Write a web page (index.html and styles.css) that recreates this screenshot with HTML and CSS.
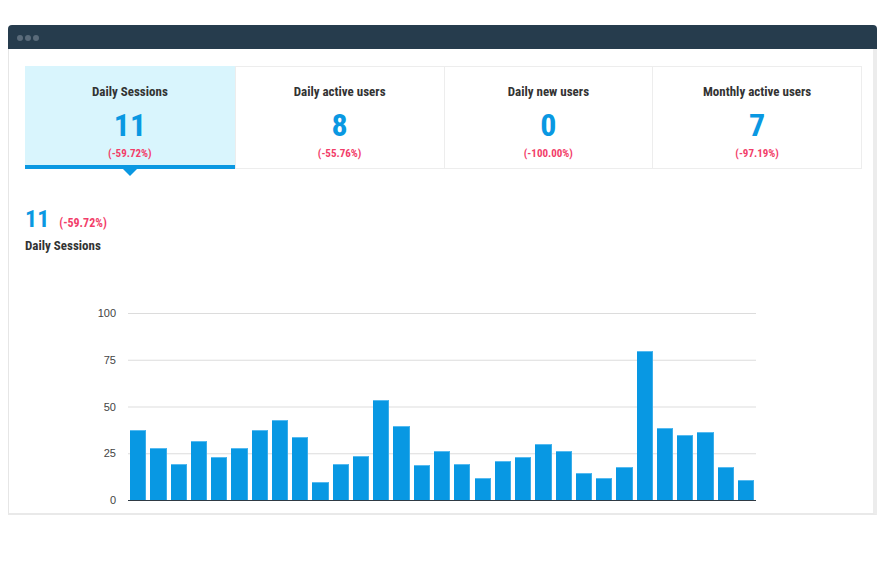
FILE: index.html
```html
<!DOCTYPE html>
<html lang="en">
<head>
<meta charset="utf-8">
<title>Daily Sessions</title>
<link rel="stylesheet" href="styles.css">
</head>
<body>
<div class="window">
  <div class="titlebar">
    <span class="dot"></span><span class="dot"></span><span class="dot"></span>
  </div>
  <div class="window-body">
    <div class="tabs">
      <div class="tab active">
        <div class="tab-title">Daily Sessions</div>
        <div class="tab-value">11</div>
        <div class="tab-change">(-59.72%)</div>
      </div>
      <div class="tab">
        <div class="tab-title">Daily active users</div>
        <div class="tab-value">8</div>
        <div class="tab-change">(-55.76%)</div>
      </div>
      <div class="tab">
        <div class="tab-title">Daily new users</div>
        <div class="tab-value">0</div>
        <div class="tab-change">(-100.00%)</div>
      </div>
      <div class="tab">
        <div class="tab-title">Monthly active users</div>
        <div class="tab-value">7</div>
        <div class="tab-change">(-97.19%)</div>
      </div>
    </div>

    <div class="summary">
      <div class="summary-head">
        <span class="summary-value">11</span>
        <span class="summary-change">(-59.72%)</span>
      </div>
      <div class="summary-label">Daily Sessions</div>
    </div>

    <div class="chart">
      <div class="y-axis">
        <span>100</span><span>75</span><span>50</span><span>25</span><span>0</span>
      </div>
      <div class="plot">
        <div class="col"><div class="bar" style="height:70px"></div></div>
        <div class="col"><div class="bar" style="height:52px"></div></div>
        <div class="col"><div class="bar" style="height:36px"></div></div>
        <div class="col"><div class="bar" style="height:59px"></div></div>
        <div class="col"><div class="bar" style="height:43px"></div></div>
        <div class="col"><div class="bar" style="height:52px"></div></div>
        <div class="col"><div class="bar" style="height:70px"></div></div>
        <div class="col"><div class="bar" style="height:80px"></div></div>
        <div class="col"><div class="bar" style="height:63px"></div></div>
        <div class="col"><div class="bar" style="height:18px"></div></div>
        <div class="col"><div class="bar" style="height:36px"></div></div>
        <div class="col"><div class="bar" style="height:44px"></div></div>
        <div class="col"><div class="bar" style="height:100px"></div></div>
        <div class="col"><div class="bar" style="height:74px"></div></div>
        <div class="col"><div class="bar" style="height:35px"></div></div>
        <div class="col"><div class="bar" style="height:49px"></div></div>
        <div class="col"><div class="bar" style="height:36px"></div></div>
        <div class="col"><div class="bar" style="height:22px"></div></div>
        <div class="col"><div class="bar" style="height:39px"></div></div>
        <div class="col"><div class="bar" style="height:43px"></div></div>
        <div class="col"><div class="bar" style="height:56px"></div></div>
        <div class="col"><div class="bar" style="height:49px"></div></div>
        <div class="col"><div class="bar" style="height:27px"></div></div>
        <div class="col"><div class="bar" style="height:22px"></div></div>
        <div class="col"><div class="bar" style="height:33px"></div></div>
        <div class="col"><div class="bar" style="height:149px"></div></div>
        <div class="col"><div class="bar" style="height:72px"></div></div>
        <div class="col"><div class="bar" style="height:65px"></div></div>
        <div class="col"><div class="bar" style="height:68px"></div></div>
        <div class="col"><div class="bar" style="height:33px"></div></div>
        <div class="col"><div class="bar" style="height:20px"></div></div>
      </div>
    </div>
  </div>
</div>
</body>
</html>
```

FILE: styles.css
```css
* { box-sizing: border-box; }

html, body {
  margin: 0;
  padding: 0;
  background: #ffffff;
}

body {
  font-family: "Roboto Condensed", Roboto, "Liberation Sans", sans-serif;
  font-stretch: condensed;
  color: #333333;
}

.window {
  width: 869px;
  margin: 25px 0 0 8px;
}

.titlebar {
  height: 24px;
  background: #263c4d;
  border-radius: 4px 4px 0 0;
  display: flex;
  align-items: center;
  gap: 2px;
  padding: 1px 0 0 9px;
}

.dot {
  width: 6px;
  height: 6px;
  border-radius: 50%;
  background: #5a6b7a;
}

.window-body {
  height: 466px;
  border-left: 1px solid #e6e6e6;
  border-right: 4px solid #ececec;
  border-bottom: 2px solid #e9e9e9;
  padding: 17px 11px 0 16px;
}

/* ---------- tabs ---------- */
.tabs {
  display: grid;
  grid-template-columns: repeat(4, 1fr);
  height: 103px;
  border: 1px solid #ededed;
}

.tab {
  position: relative;
  display: flex;
  flex-direction: column;
  align-items: center;
  padding-top: 17px;
  border-left: 1px solid #ededed;
}

.tab:first-child { border-left: none; }

.tab.active {
  background: #d9f5fd;
  margin: -1px 0 -1px -1px;
  padding-top: 18px;
}

.tab.active::after {
  content: "";
  position: absolute;
  left: 0;
  right: 0;
  bottom: 0;
  height: 4px;
  background: #0a98e2;
}

.tab.active::before {
  content: "";
  position: absolute;
  left: 50%;
  bottom: -7px;
  margin-left: -7px;
  border-left: 7px solid transparent;
  border-right: 7px solid transparent;
  border-top: 7px solid #0a98e2;
}

.tab-title {
  font-size: 13px;
  font-weight: 700;
  line-height: 16px;
  color: #333333;
}

.tab-value {
  margin-top: 8px;
  font-size: 32px;
  font-weight: 700;
  line-height: 34px;
  color: #0a98e2;
}

.tab-change {
  margin-top: 5px;
  font-size: 11px;
  font-weight: 700;
  line-height: 14px;
  color: #f23e6a;
}

/* ---------- summary ---------- */
.summary {
  margin-top: 37px;
}

.summary-head {
  display: flex;
  align-items: baseline;
  gap: 10px;
}

.summary-value {
  font-size: 24px;
  font-weight: 700;
  line-height: 26px;
  color: #0a98e2;
}

.summary-change {
  font-size: 12px;
  font-weight: 700;
  color: #f23e6a;
}

.summary-label {
  margin-top: 6px;
  font-size: 13px;
  font-weight: 700;
  line-height: 16px;
  color: #333333;
}

/* ---------- chart ---------- */
.chart {
  display: flex;
  margin-top: 59px;
}

.y-axis {
  width: 91px;
  height: 201px;
  margin-top: -7px;
  display: flex;
  flex-direction: column;
  justify-content: space-between;
  align-items: flex-end;
  font-family: "Liberation Sans", Arial, sans-serif;
  font-stretch: normal;
  font-size: 11px;
  line-height: 14px;
  color: #444444;
}

.plot {
  margin-left: 12px;
  width: 628px;
  height: 188px;
  display: flex;
  align-items: flex-end;
  border-bottom: 1px solid #2f3a44;
  background-image: linear-gradient(#dcdcdc 1px, transparent 1px);
  background-size: 100% 46.75px;
}

.col {
  flex: 1;
  display: flex;
  justify-content: center;
}

.bar {
  width: 80%;
  background: #0898e3;
  border-top: 1px solid #55baf0;
  border-right: 1px solid #3aaeea;
}
```
